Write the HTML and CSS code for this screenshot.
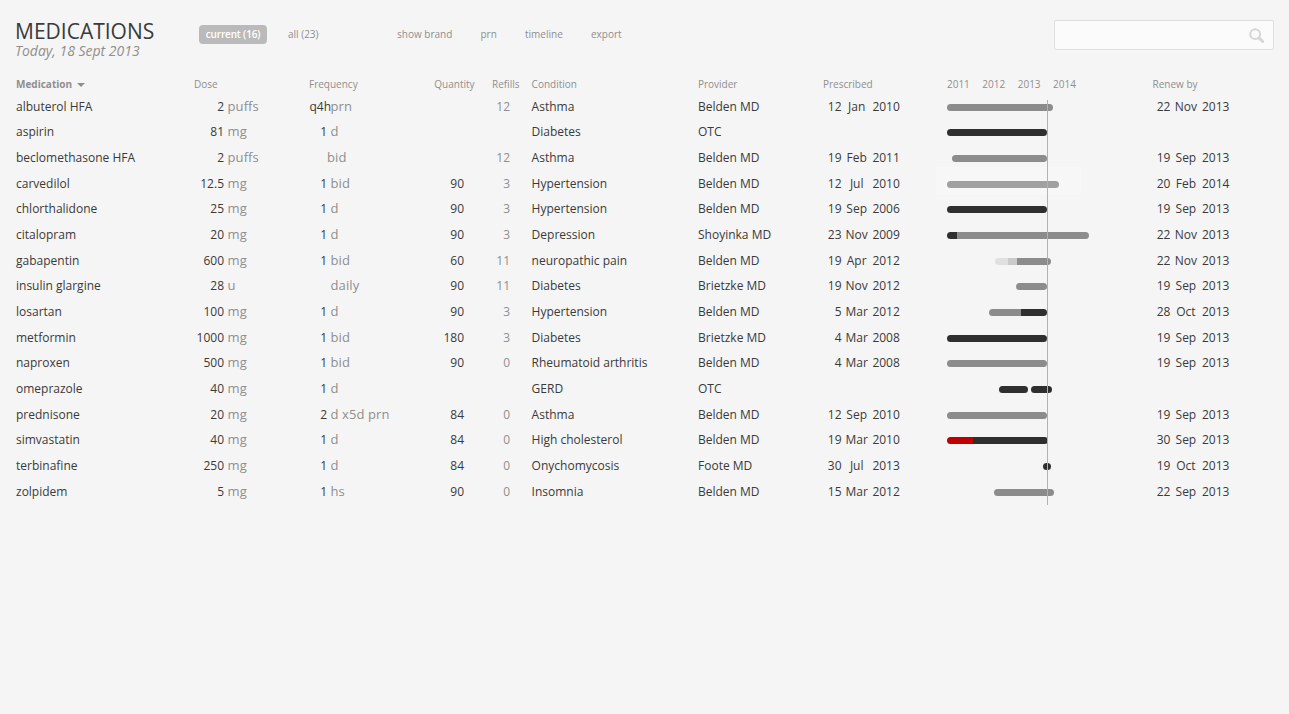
FILE: index.html
```
<!DOCTYPE html>
<html lang="en">
<head>
<meta charset="utf-8">
<title>Medications</title>
<link rel="stylesheet" href="styles.css">
</head>
<body>
<header class="top">
  <div class="heading">
    <h1>MEDICATIONS</h1>
    <p class="today">Today, 18 Sept 2013</p>
  </div>
  <nav class="filters"><a class="active">current (16)</a><a class="all">all (23)</a></nav>
  <nav class="tools"><a>show brand</a><a>prn</a><a>timeline</a><a>export</a></nav>
  <div class="search">
    <svg width="16" height="16" viewBox="0 0 16 16"><circle cx="6.2" cy="6.2" r="4.9" fill="none" stroke="#d6d6d6" stroke-width="2"/><path d="M9.8 9.8L13.6 13.4" stroke="#d6d6d6" stroke-width="3" stroke-linecap="round"/></svg>
  </div>
</header>
<main class="list">
  <div class="row head">
    <b class="sort">Medication <i class="arrow"></i></b><span>Dose</span><span>Frequency</span><span>Quantity</span><span>Refills</span><span>Condition</span><span>Provider</span><span>Prescribed</span><span class="years"><span>2011</span><span>2012</span><span>2013</span><span>2014</span></span><span>Renew by</span>
  </div>
  <div class="row"><span>albuterol HFA</span><span class="num">2</span><span class="unit">puffs</span><span class="num wide">q4h</span><span class="unit">prn</span><span class="num"></span><span class="num ref">12</span><span class="cond">Asthma</span><span>Belden MD</span><span class="date"><span>12</span><span>Jan</span><span>2010</span></span><span class="track"><span class="bar"><i style="width:106px"></i></span></span><span class="date renew"><span>22</span><span>Nov</span><span>2013</span></span></div>
  <div class="row"><span>aspirin</span><span class="num">81</span><span class="unit">mg</span><span class="num">1</span><span class="unit">d</span><span class="num"></span><span class="num ref"></span><span class="cond">Diabetes</span><span>OTC</span><span class="date"></span><span class="track"><span class="bar"><i class="dark" style="width:100px"></i></span></span><span class="date renew"></span></div>
  <div class="row"><span>beclomethasone HFA</span><span class="num">2</span><span class="unit">puffs</span><span class="num"></span><span class="unit near">bid</span><span class="num"></span><span class="num ref">12</span><span class="cond">Asthma</span><span>Belden MD</span><span class="date"><span>19</span><span>Feb</span><span>2011</span></span><span class="track"><span class="bar" style="margin-left:5px"><i style="width:95px"></i></span></span><span class="date renew"><span>19</span><span>Sep</span><span>2013</span></span></div>
  <div class="row"><span>carvedilol</span><span class="num">12.5</span><span class="unit">mg</span><span class="num">1</span><span class="unit">bid</span><span class="num">90</span><span class="num ref">3</span><span class="cond">Hypertension</span><span>Belden MD</span><span class="date"><span>12</span><span>Jul</span><span>2010</span></span><span class="track hover"><span class="bar"><i class="soft" style="width:112px"></i></span></span><span class="date renew"><span>20</span><span>Feb</span><span>2014</span></span></div>
  <div class="row"><span>chlorthalidone</span><span class="num">25</span><span class="unit">mg</span><span class="num">1</span><span class="unit">d</span><span class="num">90</span><span class="num ref">3</span><span class="cond">Hypertension</span><span>Belden MD</span><span class="date"><span>19</span><span>Sep</span><span>2006</span></span><span class="track"><span class="bar"><i class="dark" style="width:100px"></i></span></span><span class="date renew"><span>19</span><span>Sep</span><span>2013</span></span></div>
  <div class="row"><span>citalopram</span><span class="num">20</span><span class="unit">mg</span><span class="num">1</span><span class="unit">d</span><span class="num">90</span><span class="num ref">3</span><span class="cond">Depression</span><span>Shoyinka MD</span><span class="date"><span>23</span><span>Nov</span><span>2009</span></span><span class="track"><span class="bar"><i class="dark" style="width:10px"></i><i style="width:132px"></i></span></span><span class="date renew"><span>22</span><span>Nov</span><span>2013</span></span></div>
  <div class="row"><span>gabapentin</span><span class="num">600</span><span class="unit">mg</span><span class="num">1</span><span class="unit">bid</span><span class="num">60</span><span class="num ref">11</span><span class="cond">neuropathic pain</span><span>Belden MD</span><span class="date"><span>19</span><span>Apr</span><span>2012</span></span><span class="track"><span class="bar" style="margin-left:48px"><i class="pale" style="width:13px"></i><i class="light" style="width:9px"></i><i style="width:34px"></i></span></span><span class="date renew"><span>22</span><span>Nov</span><span>2013</span></span></div>
  <div class="row"><span>insulin glargine</span><span class="num">28</span><span class="unit">u</span><span class="num"></span><span class="unit">daily</span><span class="num">90</span><span class="num ref">11</span><span class="cond">Diabetes</span><span>Brietzke MD</span><span class="date"><span>19</span><span>Nov</span><span>2012</span></span><span class="track"><span class="bar" style="margin-left:69px"><i style="width:31px"></i></span></span><span class="date renew"><span>19</span><span>Sep</span><span>2013</span></span></div>
  <div class="row"><span>losartan</span><span class="num">100</span><span class="unit">mg</span><span class="num">1</span><span class="unit">d</span><span class="num">90</span><span class="num ref">3</span><span class="cond">Hypertension</span><span>Belden MD</span><span class="date"><span>5</span><span>Mar</span><span>2012</span></span><span class="track"><span class="bar" style="margin-left:42px"><i style="width:32px"></i><i class="dark" style="width:26px"></i></span></span><span class="date renew"><span>28</span><span>Oct</span><span>2013</span></span></div>
  <div class="row"><span>metformin</span><span class="num">1000</span><span class="unit">mg</span><span class="num">1</span><span class="unit">bid</span><span class="num">180</span><span class="num ref">3</span><span class="cond">Diabetes</span><span>Brietzke MD</span><span class="date"><span>4</span><span>Mar</span><span>2008</span></span><span class="track"><span class="bar"><i class="dark" style="width:100px"></i></span></span><span class="date renew"><span>19</span><span>Sep</span><span>2013</span></span></div>
  <div class="row"><span>naproxen</span><span class="num">500</span><span class="unit">mg</span><span class="num">1</span><span class="unit">bid</span><span class="num">90</span><span class="num ref">0</span><span class="cond">Rheumatoid arthritis</span><span>Belden MD</span><span class="date"><span>4</span><span>Mar</span><span>2008</span></span><span class="track"><span class="bar"><i style="width:100px"></i></span></span><span class="date renew"><span>19</span><span>Sep</span><span>2013</span></span></div>
  <div class="row"><span>omeprazole</span><span class="num">40</span><span class="unit">mg</span><span class="num">1</span><span class="unit">d</span><span class="num"></span><span class="num ref"></span><span class="cond">GERD</span><span>OTC</span><span class="date"></span><span class="track"><span class="bar" style="margin-left:52px"><i class="dark" style="width:29px"></i></span><span class="bar" style="margin-left:3px"><i class="dark" style="width:21px"></i></span></span><span class="date renew"></span></div>
  <div class="row"><span>prednisone</span><span class="num">20</span><span class="unit">mg</span><span class="num">2</span><span class="unit">d x5d prn</span><span class="num">84</span><span class="num ref">0</span><span class="cond">Asthma</span><span>Belden MD</span><span class="date"><span>12</span><span>Sep</span><span>2010</span></span><span class="track"><span class="bar"><i style="width:100px"></i></span></span><span class="date renew"><span>19</span><span>Sep</span><span>2013</span></span></div>
  <div class="row"><span>simvastatin</span><span class="num">40</span><span class="unit">mg</span><span class="num">1</span><span class="unit">d</span><span class="num">84</span><span class="num ref">0</span><span class="cond">High cholesterol</span><span>Belden MD</span><span class="date"><span>19</span><span>Mar</span><span>2010</span></span><span class="track"><span class="bar"><i class="red" style="width:26px"></i><i class="dark" style="width:75px"></i></span></span><span class="date renew"><span>30</span><span>Sep</span><span>2013</span></span></div>
  <div class="row"><span>terbinafine</span><span class="num">250</span><span class="unit">mg</span><span class="num">1</span><span class="unit">d</span><span class="num">84</span><span class="num ref">0</span><span class="cond">Onychomycosis</span><span>Foote MD</span><span class="date"><span>30</span><span>Jul</span><span>2013</span></span><span class="track"><span class="bar" style="margin-left:96px"><i class="dark" style="width:8px"></i></span></span><span class="date renew"><span>19</span><span>Oct</span><span>2013</span></span></div>
  <div class="row"><span>zolpidem</span><span class="num">5</span><span class="unit">mg</span><span class="num">1</span><span class="unit">hs</span><span class="num">90</span><span class="num ref">0</span><span class="cond">Insomnia</span><span>Belden MD</span><span class="date"><span>15</span><span>Mar</span><span>2012</span></span><span class="track"><span class="bar" style="margin-left:47px"><i style="width:60px"></i></span></span><span class="date renew"><span>22</span><span>Sep</span><span>2013</span></span></div>
  <div class="now"></div>
</main>
</body>
</html>
```
FILE: styles.css
```
* { box-sizing: border-box; }
body {
  margin: 0;
  height: 714px;
  background: #f5f5f5;
  color: #3a3a3a;
  font: 12px/17px "Open Sans", sans-serif;
  white-space: nowrap;
  overflow: hidden;
}
.top {
  display: flex;
  align-items: flex-start;
  height: 76px;
  padding: 20px 15px 0;
  color: #8f8f8f;
}
.heading { width: 184px; }
h1 {
  margin: 0;
  font-size: 21px;
  line-height: 22px;
  font-weight: 400;
  color: #3a3a3a;
}
.today {
  margin: 0;
  font-size: 14px;
  line-height: 18px;
  font-style: italic;
}
.filters, .tools {
  display: flex;
  padding-top: 5px;
  font-size: 10px;
  line-height: 19px;
}
.filters { width: 198px; gap: 21px; }
.filters .active {
  width: 68px;
  border-radius: 4px;
  background: #bababa;
  color: #fff;
  font-weight: 600;
  letter-spacing: -0.15px;
  text-align: center;
}
.tools { gap: 28.2px; }
.search {
  display: flex;
  justify-content: flex-end;
  width: 220px;
  height: 30px;
  margin-left: auto;
  padding: 7px 8px 0 0;
  border: 1px solid #dedede;
  border-radius: 2px;
  background: #fbfbfb;
}
.list { position: relative; }
.row {
  display: grid;
  grid-template-columns: 178px 30px 81px 22px 103px 34px 46px 188px 125px 124px 205.6px 100px;
  height: 25.667px;
  padding-left: 16px;
  align-items: center;
}
.head {
  grid-template-columns: 178px 115px 125.3px 57.7px 39.6px 166.4px 125px 124px 205.6px 100px;
  height: 16.17px;
  align-items: start;
  color: #8f8f8f;
  font-size: 10px;
}
.arrow {
  display: inline-block;
  margin-left: 2px;
  vertical-align: 1px;
  border: 4px solid transparent;
  border-top-color: #8f8f8f;
  border-bottom: 0;
}
.years { display: flex; gap: 12.5px; }
.num { display: flex; justify-content: flex-end; }
.wide { margin-right: -4px; }
.unit {
  padding-left: 3.5px;
  font-size: 13px;
  letter-spacing: 0.1px;
  color: #8f8f8f;
}
.near { padding-left: 0; }
.ref { color: #8f8f8f; }
.cond { padding-left: 21.6px; }
.date {
  display: grid;
  grid-template-columns: 18.6px 30.8px auto;
  align-items: center;
}
.renew { grid-template-columns: 17.8px 31.6px auto; }
.date span:first-child { text-align: right; }
.date span:nth-child(2) { text-align: center; padding-right: 0.6px; }
.track {
  display: flex;
  align-items: center;
  height: 28px;
  padding-top: 2px;
}
.hover {
  align-self: start;
  width: 145px;
  margin: -2px 0 2px -11px;
  padding: 6px 0 0 11px;
  background: #f7f7f7;
}
.bar {
  display: flex;
  height: 7px;
  border-radius: 4px;
  overflow: hidden;
}
.bar i { background: #8c8c8c; }
.bar .dark { background: #2f2f2f; }
.bar .soft { background: #a0a0a0; }
.bar .pale { background: #e0e0e0; }
.bar .light { background: #cacaca; }
.bar .red { background: #c00000; }
.now {
  position: absolute;
  left: 1047px;
  top: 24px;
  width: 1px;
  height: 405px;
  background: #b2b2b2;
}
```
